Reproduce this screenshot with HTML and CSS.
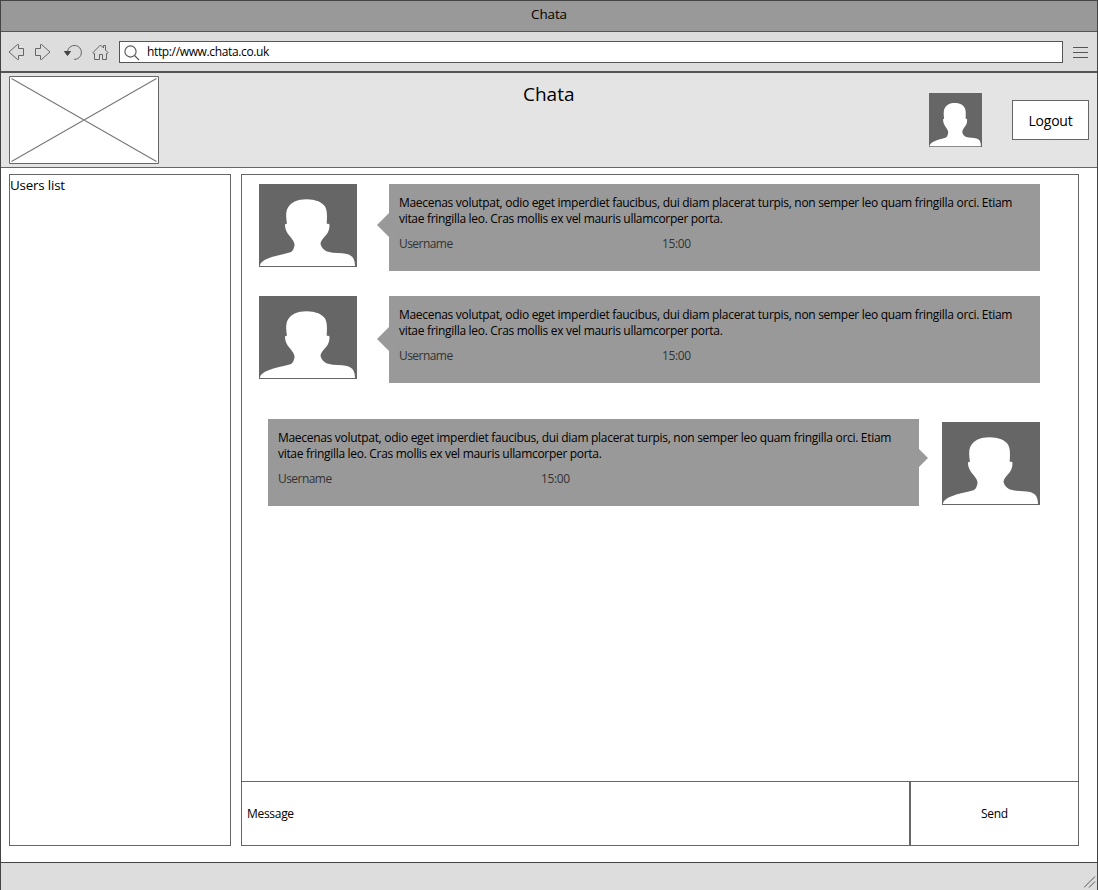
FILE: index.html
```html
<!DOCTYPE html>
<html lang="en">
<head>
<meta charset="utf-8">
<title>Chata</title>
<link rel="stylesheet" href="styles.css">
</head>
<body>
<svg class="defs" width="0" height="0" aria-hidden="true">
  <symbol id="person" viewBox="0 0 98 83" preserveAspectRatio="none">
    <path fill="#666" d="M0 0H98V83H0Z"/>
    <path fill="#fff" d="M1 82C1 79 4 76.500 9 74.500C16 71.500 24 70.500 31.500 68.300C34 67.500 35.500 63 35.500 60.500C35.500 57 31 52.500 29 50C27 47 26 44 26 41C26 39.800 27 39.700 28 39.700C27 34 26.800 29 28 25.500C31 18 39 15.200 47.500 15.200C56 15.200 64 18 66.500 23.500C68.500 28 68 34 67.700 39.700C69 39.700 70.500 39.500 70.500 41C70.500 45 69.500 48 67.500 50.500C65 53.500 61.800 56.500 61.500 59.500C61.800 63 65 66.500 69 67.800C75 69.500 82 68.700 88 70C94 71.500 96 76 96 82Z"/>
  </symbol>
</svg>
<div class="window">
  <div class="titlebar">Chata</div>
  <div class="toolbar">
    <svg class="nav" width="110" height="38" viewBox="1 32 110 38" fill="none" stroke="#666" stroke-width="1">
      <path d="M9 52L17.500 44.500H18.500V48.500H23.500V55.500H18.500V59.500H17.500Z"/>
      <path d="M50 52L41.500 44.500H40.500V48.500H35.500V55.500H40.500V59.500H41.500Z"/>
      <path d="M67.500 51.500A7 7 0 1 1 74 59.400"/>
      <path d="M64.500 51.500H70.500L67.500 55.500Z" fill="#444" stroke="#444"/>
      <path d="M93 52.500L100.500 45L103.500 48V45.500H105.500V50L108 52.500L107.500 53.500H106.500V59.500H102.500V54.500H99.500V59.500H94.500V53.500H93.500Z"/>
    </svg>
    <div class="address">
      <svg width="18" height="18" viewBox="0 0 18 18" fill="none" stroke="#555" stroke-width="1.100"><circle cx="6.500" cy="6.500" r="5.600"/><path d="M10.500 10.500L15 15"/></svg>
      <span class="url">http://www.chata.co.uk</span>
    </div>
    <svg class="menu" width="15" height="11" viewBox="0 0 15 11" stroke="#555"><path d="M0 .5H15M0 5.500H15M0 10.500H15"/></svg>
  </div>
  <header class="header">
    <svg class="logo" width="150" height="88" viewBox="0 0 150 88"><path d="M.5 .5H149.500V87.500H.5Z" fill="#fff" stroke="#666"/><path d="M2.500 2.500L147.500 85.500M147.500 2.500L2.500 85.500" stroke="#777" stroke-width="1.100"/></svg>
    <h1 class="heading">Chata</h1>
    <svg class="me"><use href="#person"/></svg>
    <button class="logout"><span>Logout</span></button>
  </header>
  <main class="content">
    <aside class="users"><span>Users list</span></aside>
    <section class="chat">
      <div class="messages">
        <article class="message">
          <svg class="avatar"><use href="#person"/></svg>
          <div class="bubble">
            <p><span class="first">Maecenas volutpat, odio eget imperdiet faucibus, dui diam placerat turpis, non semper leo quam fringilla orci. Etiam</span><br><span class="second">vitae fringilla leo. Cras mollis ex vel mauris ullamcorper porta.</span></p>
            <div class="meta"><span class="name">Username</span><span class="time">15:00</span></div>
          </div>
        </article>
        <article class="message next">
          <svg class="avatar"><use href="#person"/></svg>
          <div class="bubble">
            <p><span class="first">Maecenas volutpat, odio eget imperdiet faucibus, dui diam placerat turpis, non semper leo quam fringilla orci. Etiam</span><br><span class="second">vitae fringilla leo. Cras mollis ex vel mauris ullamcorper porta.</span></p>
            <div class="meta"><span class="name">Username</span><span class="time">15:00</span></div>
          </div>
        </article>
        <article class="message own">
          <div class="bubble">
            <p><span class="first">Maecenas volutpat, odio eget imperdiet faucibus, dui diam placerat turpis, non semper leo quam fringilla orci. Etiam</span><br><span class="second">vitae fringilla leo. Cras mollis ex vel mauris ullamcorper porta.</span></p>
            <div class="meta"><span class="name">Username</span><span class="time">15:00</span></div>
          </div>
          <svg class="avatar"><use href="#person"/></svg>
        </article>
      </div>
      <div class="composer">
        <div class="input"><span>Message</span></div>
        <div class="send"><span>Send</span></div>
      </div>
    </section>
  </main>
  <footer class="status"><svg width="12" height="12" viewBox="0 0 12 12" stroke="#555" fill="none"><path d="M0 11.500L11 .5M5 11.500L11 5.500"/></svg></footer>
</div>
</body>
</html>
```
FILE: styles.css
```css
* { box-sizing: border-box; }
body { margin: 0; font-family: "Open Sans", "Noto Sans", sans-serif; font-size: 12px; color: #000; background: #fff; }
.defs { display: block; height: 0; }
svg { display: block; flex: none; }
.window { width: 1098px; height: 890px; border: 1px solid #444; border-bottom: 0; display: flex; flex-direction: column; overflow: hidden; }
.titlebar { height: 31px; background: #999; border-bottom: 1px solid #555; text-align: center; font-size: 13.400px; line-height: 27px; letter-spacing: -0.100px; }
.toolbar { height: 41px; background: #ddd; border-bottom: 2px solid #555; display: flex; align-items: flex-start; }
.address { width: 944px; height: 22px; margin: 9px 0 0 8px; background: #fff; border: 1px solid #555; display: flex; padding-left: 4px; }
.address svg { margin-top: 3px; }
.url { line-height: 19px; margin-left: 5px; font-size: 12px; letter-spacing: -0.360px; }
.menu { margin: 15px 0 0 10px; }
.header { height: 95px; background: #e4e4e4; border-bottom: 1px solid #666; display: flex; align-items: flex-start; padding: 3px 8px 0; }
.heading { margin: 5px 0 0; width: 770px; padding-left: 364px; font-size: 19px; font-weight: 400; line-height: 26px; }
.me { width: 53px; height: 54px; margin-top: 17px; }
.logout { width: 77px; height: 40px; margin: 24px 0 0 30px; padding: 1px 0 0; background: #fff; border: 1px solid #666; border-radius: 0; font: 14px "Open Sans", sans-serif; letter-spacing: -0.200px; color: #000; }
.content { height: 694px; padding: 6px 18px 16px 8px; display: flex; gap: 10px; }
.users { width: 222px; height: 672px; border: 1px solid #666; font-size: 13.400px; line-height: 20px; letter-spacing: -0.200px; }
.chat { width: 838px; height: 672px; border: 1px solid #666; display: flex; flex-direction: column; }
.messages { flex: 0 0 606px; padding: 9px 38px 0 17px; }
.message { display: flex; align-items: flex-start; gap: 32px; }
.next { margin-top: 25px; }
.own { margin: 36px 0 0 9px; gap: 23px; }
.avatar { width: 98px; height: 83px; }
.own .avatar { margin-top: 3px; }
.bubble { width: 651px; height: 87px; background: #999; padding: 11px 10px 0; position: relative; flex: none; white-space: nowrap; }
.bubble::before { content: ""; position: absolute; left: -12px; top: 29px; width: 12px; height: 24px; background: #999; clip-path: polygon(100% 0, 0 50%, 100% 100%); }
.next .bubble::before { top: 31px; }
.own .bubble::before { left: 651px; top: 30px; width: 9px; height: 18px; clip-path: polygon(0 0, 100% 50%, 0 100%); }
.bubble p { margin: 0; line-height: 16px; font-size: 12px; }
.first { letter-spacing: -0.300px; }
.second { letter-spacing: -0.310px; }
.meta { display: flex; margin-top: 9px; line-height: 16px; color: #333; letter-spacing: -0.400px; }
.name { width: 263px; letter-spacing: -0.550px; }
.composer { flex: 0 0 64px; display: flex; border-top: 1px solid #666; }
.input { width: 669px; height: 63px; border-right: 2px solid #666; padding-left: 5px; line-height: 64px; letter-spacing: -0.300px; }
.send { flex: 1; text-align: center; line-height: 64px; letter-spacing: -0.300px; }
.status { height: 28px; background: #ddd; border-top: 1px solid #444; display: flex; justify-content: flex-end; padding: 13px 1px 0 0; }
```
